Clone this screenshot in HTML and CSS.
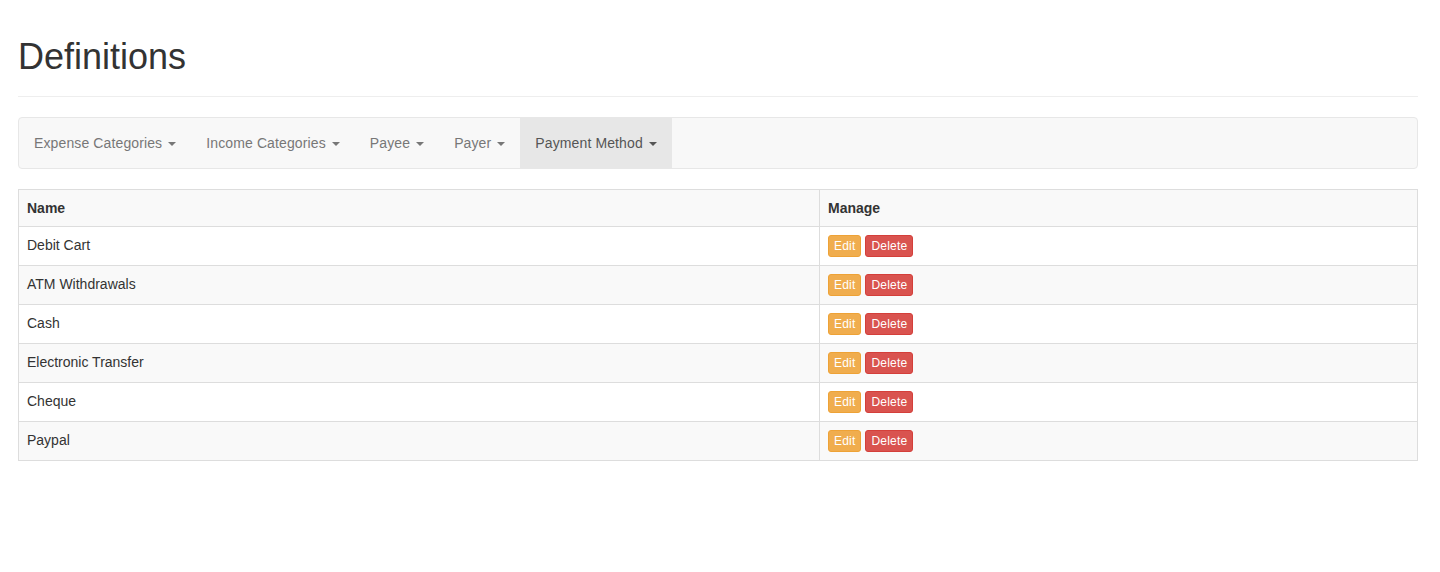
FILE: index.html
```html
<!DOCTYPE html>
<html>
<head>
<meta charset="utf-8">
<title>Definitions</title>
<link rel="stylesheet" href="styles.css">
</head>
<body>
<div class="container">
  <div class="page-header">
    <h1>Definitions</h1>
  </div>
  <nav class="navbar">
    <ul class="nav">
      <li><a href="#">Expense Categories <span class="caret"></span></a></li>
      <li><a href="#">Income Categories <span class="caret"></span></a></li>
      <li><a href="#">Payee <span class="caret"></span></a></li>
      <li><a href="#">Payer <span class="caret"></span></a></li>
      <li class="active"><a href="#">Payment Method <span class="caret"></span></a></li>
    </ul>
  </nav>
  <table class="table">
    <tbody>
      <tr><th class="col-name">Name</th><th>Manage</th></tr>
      <tr><td>Debit Cart</td><td><div class="actions"><a class="btn btn-warning">Edit</a><a class="btn btn-danger">Delete</a></div></td></tr>
      <tr><td>ATM Withdrawals</td><td><div class="actions"><a class="btn btn-warning">Edit</a><a class="btn btn-danger">Delete</a></div></td></tr>
      <tr><td>Cash</td><td><div class="actions"><a class="btn btn-warning">Edit</a><a class="btn btn-danger">Delete</a></div></td></tr>
      <tr><td>Electronic Transfer</td><td><div class="actions"><a class="btn btn-warning">Edit</a><a class="btn btn-danger">Delete</a></div></td></tr>
      <tr><td>Cheque</td><td><div class="actions"><a class="btn btn-warning">Edit</a><a class="btn btn-danger">Delete</a></div></td></tr>
      <tr><td>Paypal</td><td><div class="actions"><a class="btn btn-warning">Edit</a><a class="btn btn-danger">Delete</a></div></td></tr>
    </tbody>
  </table>
</div>
</body>
</html>
```
FILE: styles.css
```css
* { box-sizing: border-box; }
html, body { margin: 0; padding: 0; background: #fff; }
body {
  font-family: "Liberation Sans", Arial, Helvetica, sans-serif;
  font-size: 14px;
  line-height: 20px;
  color: #333;
}
.container {
  width: 1400px;
  margin-left: 18px;
}
.page-header {
  padding-bottom: 9px;
  margin: 0 0 20px;
  border-bottom: 1px solid #eee;
}
.page-header h1 {
  margin: 37px 0 10px;
  font-size: 36px;
  font-weight: 500;
  line-height: 1.1;
  color: #333;
}
.navbar {
  min-height: 50px;
  margin-bottom: 20px;
  background: #f8f8f8;
  border: 1px solid #e7e7e7;
  border-radius: 4px;
}
.nav {
  display: flex;
  list-style: none;
  margin: 0;
  padding: 0;
}
.nav a {
  display: block;
  padding: 15px;
  line-height: 20px;
  color: #777;
  text-decoration: none;
  letter-spacing: 0.12px;
}
.nav .active a {
  background: #e7e7e7;
  color: #555;
}
.caret {
  display: inline-block;
  width: 0;
  height: 0;
  margin-left: 2px;
  vertical-align: middle;
  border-top: 4px solid;
  border-right: 4px solid transparent;
  border-left: 4px solid transparent;
}
.table {
  width: 100%;
  border-collapse: collapse;
  border-spacing: 0;
  border: 1px solid #ddd;
}
.table th, .table td {
  padding: 8px;
  line-height: 20px;
  text-align: left;
  vertical-align: top;
  border: 1px solid #ddd;
}
.table th { font-weight: bold; }
.table .col-name { width: 801px; }
.table tr:nth-of-type(odd) { background: #f9f9f9; }
.actions {
  display: flex;
  gap: 4px;
  height: 22px;
}
.btn {
  display: block;
  height: 22px;
  padding: 1px 5px;
  font-size: 12px;
  line-height: 18px;
  border: 1px solid transparent;
  border-radius: 3px;
  color: #fff;
  cursor: pointer;
  letter-spacing: 0.2px;
}
.btn-warning { background: #f0ad4e; border-color: #eea236; }
.btn-danger { background: #d9534f; border-color: #d43f3a; }
```
